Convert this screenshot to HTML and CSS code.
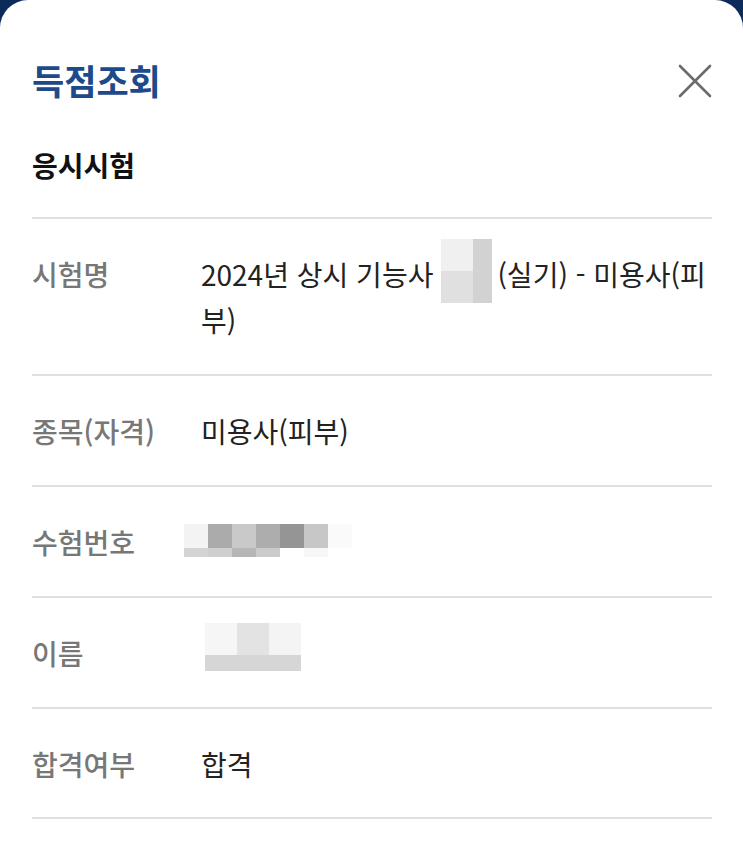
FILE: index.html
```html
<!DOCTYPE html>
<html lang="ko">
<head>
<meta charset="utf-8">
<link rel="stylesheet" href="styles.css">
</head>
<body>
<div class="sheet">
  <header class="head">
    <h1 class="title">득점조회</h1>
    <button class="close" aria-label="닫기">
      <svg width="34" height="34" viewBox="0 0 34 34"><path d="M2 2 L32 32 M32 2 L2 32" stroke="#6b6b6b" stroke-width="2.6" stroke-linecap="round" fill="none"/></svg>
    </button>
  </header>
  <h2 class="section">응시시험</h2>
  <dl class="table">
    <div class="row">
      <dt class="label">시험명</dt>
      <dd class="value">2024년 상시 기능사<span class="mask mask-a"><i class="a1"></i><i class="a2"></i><i class="a3"></i></span>(실기) - 미용사(피부)</dd>
    </div>
    <div class="row">
      <dt class="label">종목(자격)</dt>
      <dd class="value">미용사(피부)</dd>
    </div>
    <div class="row">
      <dt class="label">수험번호</dt>
      <dd class="value"><span class="mask mask-b"><i style="background:#f3f3f3"></i><i style="background:#ababab"></i><i style="background:#c9c9c9"></i><i style="background:#adadad"></i><i style="background:#959595"></i><i style="background:#c7c7c7"></i><i style="background:#fafafa"></i><i style="background:#d4d4d4"></i><i style="background:#cfcfcf"></i><i style="background:#b6b6b6"></i><i style="background:#cbcbcb"></i><i style="background:#fff"></i><i style="background:#f7f7f7"></i><i style="background:#fff"></i></span></dd>
    </div>
    <div class="row">
      <dt class="label">이름</dt>
      <dd class="value"><span class="mask mask-c"><i style="background:#f6f6f6"></i><i style="background:#e3e3e3"></i><i style="background:#f4f4f4"></i><i class="wide"></i></span></dd>
    </div>
    <div class="row">
      <dt class="label">합격여부</dt>
      <dd class="value">합격</dd>
    </div>
  </dl>
</div>
</body>
</html>
```
FILE: styles.css
```css
html, body {
  margin: 0;
  padding: 0;
}
body {
  background: #0c2a5a;
  font-family: "Noto Sans CJK KR", "Noto Sans", sans-serif;
}
.sheet {
  background: #fff;
  border-radius: 28px 28px 0 0;
  min-height: 859px;
  padding: 0 31px 0 32px;
  box-sizing: border-box;
  overflow: hidden;
}
.head {
  display: flex;
  justify-content: space-between;
  align-items: flex-start;
  padding-top: 60px;
}
.title {
  margin: 0;
  font-size: 35px;
  line-height: 40px;
  font-weight: 700;
  color: #1c4a8b;
}
.close {
  border: 0;
  background: none;
  padding: 0;
  margin: 4px 0 0 0;
  width: 34px;
  height: 34px;
  display: block;
}
.close svg { display: block; }
.section {
  margin: 47px 0 0 0;
  font-size: 28px;
  line-height: 36px;
  font-weight: 700;
  color: #111;
  padding-bottom: 34px;
  border-bottom: 2px solid #e0e0e0;
}
.table {
  margin: 0;
}
.row {
  display: flex;
  padding: 32px 0 31px;
  border-bottom: 2px solid #e0e0e0;
  font-size: 28px;
  line-height: 46px;
}
.row:last-child {
  padding-bottom: 30px;
}
.label {
  width: 169px;
  flex: none;
  margin: 0;
  color: #777;
  font-weight: 500;
}
.value {
  margin: 0;
  flex: 1;
  color: #222;
  font-weight: 400;
}
.mask {
  display: inline-grid;
  vertical-align: middle;
  position: relative;
}
.mask i { display: block; }
.mask-a {
  width: 51px;
  height: 64px;
  grid-template-columns: 32px 19px;
  grid-template-rows: 32px 32px;
  margin: -14px 5px -14px 8px;
  top: -7px;
}
.mask-a .a1 { background: #f0f0f0; }
.mask-a .a2 { background: #d2d2d2; grid-row: 1 / 3; grid-column: 2; }
.mask-a .a3 { background: #e0e0e0; grid-column: 1; grid-row: 2; }
.mask-b {
  grid-template-columns: repeat(7, 24px);
  grid-template-rows: 24px 9px;
  margin-left: -17px;
  top: -6px;
}
.mask-c {
  grid-template-columns: repeat(3, 32px);
  grid-template-rows: 32px 16px;
  margin-left: 4px;
  margin-top: -8px;
  margin-bottom: -8px;
  top: -10px;
}
.mask-c .wide { grid-column: 1 / 4; background: #d6d6d6; }
```
